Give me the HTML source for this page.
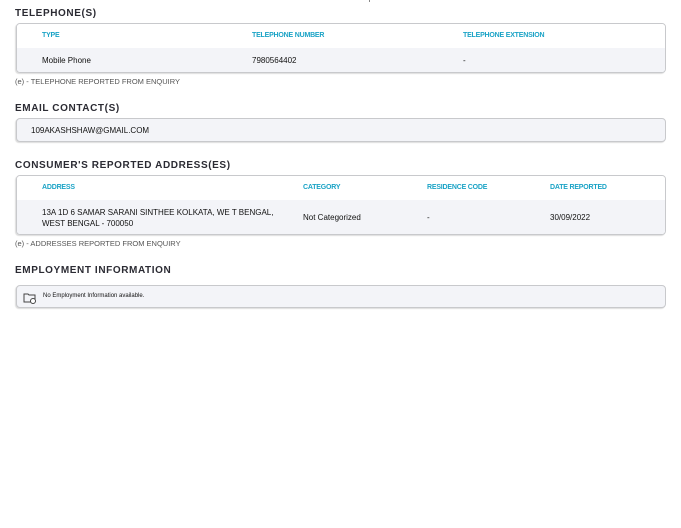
<!DOCTYPE html>
<html><head><style>
*{margin:0;padding:0;box-sizing:border-box}
body{width:681px;height:528px;background:#fff;font-family:"Liberation Sans",sans-serif;color:#222;position:relative;overflow:hidden}
.a{position:absolute}
h2{position:absolute;left:15px;font-size:10px;font-weight:bold;letter-spacing:0.6px;color:#2b2b33}
.box{position:absolute;left:16px;width:650px;border:1px solid #c8c9cc;border-radius:4px;overflow:hidden;box-shadow:-1px 1px 1px #ddd}
.g{background:#f3f4f8}
.hd{background:#fff;position:relative}
.rw{background:#f3f4f8;position:relative}
.th{position:absolute;font-size:7px;font-weight:bold;color:#1ba3c6;letter-spacing:-0.2px}
.td{position:absolute;font-size:8px;color:#222;font-weight:bold;-webkit-text-stroke:0}
.td{font-weight:normal;color:#111}
.fn{position:absolute;left:15px;font-size:7.5px;color:#555}
</style></head><body>
<div class="a" style="left:369px;top:0;width:1px;height:2px;background:#888"></div>
<h2 style="top:8px">TELEPHONE(S)</h2>
<div class="box" style="top:23px;height:50px">
 <div class="hd" style="height:24px">
  <div class="th" style="left:25px;top:8px">TYPE</div>
  <div class="th" style="left:235px;top:8px">TELEPHONE NUMBER</div>
  <div class="th" style="left:446px;top:8px">TELEPHONE EXTENSION</div>
 </div>
 <div class="rw" style="height:26px">
  <div class="td" style="left:25px;top:8px">Mobile Phone</div>
  <div class="td" style="left:235px;top:8px">7980564402</div>
  <div class="td" style="left:446px;top:8px">-</div>
 </div>
</div>
<div class="fn" style="top:77px">(e) - TELEPHONE REPORTED FROM ENQUIRY</div>
<h2 style="top:103px">EMAIL CONTACT(S)</h2>
<div class="box g" style="top:118px;height:24px">
 <div class="td" style="left:14px;top:7px">109AKASHSHAW@GMAIL.COM</div>
</div>
<h2 style="top:160px">CONSUMER'S REPORTED ADDRESS(ES)</h2>
<div class="box" style="top:175px;height:60px">
 <div class="hd" style="height:24px">
  <div class="th" style="left:25px;top:8px">ADDRESS</div>
  <div class="th" style="left:286px;top:8px">CATEGORY</div>
  <div class="th" style="left:410px;top:8px">RESIDENCE CODE</div>
  <div class="th" style="left:533px;top:8px">DATE REPORTED</div>
 </div>
 <div class="rw" style="height:36px">
  <div class="td" style="left:25px;top:7px;line-height:11px">13A 1D 6 SAMAR SARANI SINTHEE KOLKATA, WE T BENGAL,<br>WEST BENGAL - 700050</div>
  <div class="td" style="left:286px;top:13px">Not Categorized</div>
  <div class="td" style="left:410px;top:13px">-</div>
  <div class="td" style="left:533px;top:13px">30/09/2022</div>
 </div>
</div>
<div class="fn" style="top:239px">(e) - ADDRESSES REPORTED FROM ENQUIRY</div>
<h2 style="top:265px">EMPLOYMENT INFORMATION</h2>
<div class="box g" style="top:285px;height:23px">
 <svg class="a" style="left:6px;top:6px" width="14" height="12" viewBox="0 0 14 12"><path d="M1 2h4l1 1h6v7H1z" fill="none" stroke="#444" stroke-width="1"/><circle cx="10" cy="9" r="2.5" fill="#fff" stroke="#444"/></svg>
 <div class="td" style="left:26px;top:7px;font-size:6px">No Employment Information available.</div>
</div>
</body></html>
